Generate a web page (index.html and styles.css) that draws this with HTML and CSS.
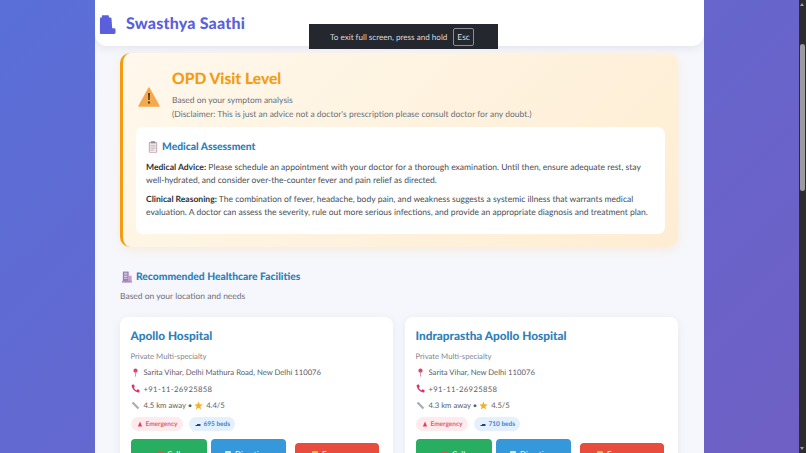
FILE: index.html
```html
<!DOCTYPE html>
<html lang="en">
<head>
    <meta charset="UTF-8">
    <meta name="viewport" content="width=device-width, initial-scale=1.0">
    <title>Swasthya Saathi</title>
    <link rel="stylesheet" href="styles.css">
</head>
<body>

    <div class="page">
        <!-- header -->
        <div class="header">
            <svg class="logo" viewBox="0 0 18 20"><path d="M1 3.5 Q1 2.5 2 2.5 H3 V1 Q3 .2 3.8 .2 H9.5 Q10.5 .2 10.5 1 V2.5 H12 Q13 2.5 13.2 3.5 L14 14 H16 Q17.5 14 17.5 15.5 V18.5 Q17.5 20 16 20 H2 Q1 20 1 19 Z" fill="#5b5fdc"/></svg>
            <span class="brand">Swasthya Saathi</span>
        </div>

        <div class="main">
            <!-- triage level -->
            <div class="level-card">
                <div class="level-top">
                    <svg class="warn" viewBox="0 0 22 20"><path d="M11 1 L21 19 H1 Z" fill="#f5a94c" stroke="#f5a94c" stroke-width="1.5" stroke-linejoin="round"/><path d="M10 6 H12 L11.7 13 H10.3 Z M10 14.5 H12 V16.5 H10 Z" fill="#4a3a28"/></svg>
                    <div>
                        <h1>OPD Visit Level</h1>
                        <p class="level-sub">Based on your symptom analysis</p>
                        <p class="level-sub">(Disclaimer: This is just an advice not a doctor's prescription please consult doctor for any doubt.)</p>
                    </div>
                </div>
                <div class="assess">
                    <h3>
                        <svg class="head-icon" viewBox="0 0 12 14"><rect x="1" y="1" width="10" height="13" rx="1" fill="#c9a6a8"/><rect x="2.2" y="2.5" width="7.6" height="10.5" fill="#f0ecef"/><rect x="3.5" y="0" width="5" height="2.5" rx=".6" fill="#8d8a99"/><path d="M3 5 H9 M3 7 H9 M3 9 H9 M3 11 H7" stroke="#a9a4b6" stroke-width=".7"/></svg>
                        Medical Assessment
                    </h3>
                    <p><b>Medical Advice:</b> Please schedule an appointment with your doctor for a thorough examination. Until then, ensure adequate rest, stay well-hydrated, and consider over-the-counter fever and pain relief as directed.</p>
                    <p><b>Clinical Reasoning:</b> The combination of fever, headache, body pain, and weakness suggests a systemic illness that warrants medical evaluation. A doctor can assess the severity, rule out more serious infections, and provide an appropriate diagnosis and treatment plan.</p>
                </div>
            </div>

            <!-- facilities -->
            <h2 class="fac-title">
                <svg class="head-icon" viewBox="0 0 12 13"><rect x="1" y="0" width="7" height="13" fill="#9a7fb5"/><rect x="8" y="5" width="3.5" height="8" fill="#c79bc4"/><path d="M2.5 2 H6.5 M2.5 4 H6.5 M2.5 6 H6.5 M2.5 8 H6.5" stroke="#e6dcef" stroke-width="1"/><rect x="0" y="11" width="12" height="2" fill="#b78fbe"/></svg>
                Recommended Healthcare Facilities
            </h2>
            <p class="fac-sub">Based on your location and needs</p>

            <div class="fac-grid">
                <div class="fac-card">
                    <h4>Apollo Hospital</h4>
                    <p class="fac-type">Private Multi-specialty</p>
                    <p class="fac-row">
                        <svg class="row-icon" viewBox="0 0 10 12"><circle cx="5" cy="3.6" r="2.8" fill="#e0416b"/><path d="M5 5 V11.5" stroke="#d98a9d" stroke-width="1.2"/></svg>
                        Sarita Vihar, Delhi Mathura Road, New Delhi 110076
                    </p>
                    <p class="fac-row">
                        <svg class="row-icon" viewBox="0 0 12 12"><path d="M1.5 1 L4 .8 L5 3.5 L3.6 4.8 Q4.8 7.4 7.3 8.5 L8.6 7 L11.3 8 V10.6 Q11 11.5 9.5 11.2 Q2 9.5 .8 2.4 Q.8 1.4 1.5 1 Z" fill="#d6336c"/></svg>
                        <span class="phone">+91-11-26925858</span>
                    </p>
                    <p class="fac-row">
                        <svg class="row-icon" viewBox="0 0 12 12"><path d="M2 2 L10 10" stroke="#a9adb5" stroke-width="3"/></svg>
                        4.5 km away •
                        <svg class="star" viewBox="0 0 12 12"><path d="M6 .6 L7.6 4.2 L11.5 4.6 L8.6 7.2 L9.4 11.2 L6 9.1 L2.6 11.2 L3.4 7.2 L.5 4.6 L4.4 4.2 Z" fill="#f0b429"/></svg>
                        4.4/5
                    </p>
                    <div class="badges">
                        <span class="badge badge-red"><svg class="badge-icon" viewBox="0 0 10 10"><path d="M5 1 L8.5 9 H1.5 Z" fill="#e0415a"/></svg>Emergency</span>
                        <span class="badge badge-blue"><svg class="badge-icon" viewBox="0 0 12 10"><path d="M1 2 V9 H11 V5 H4 V7 H1 Z" fill="#2c3e8f"/></svg>695 beds</span>
                    </div>
                    <div class="actions">
                        <span class="btn btn-green"><i class="btn-mark mark-red"></i>Call</span>
                        <span class="btn btn-blue"><i class="btn-mark mark-white"></i>Directions</span>
                        <span class="btn btn-red"><i class="btn-mark mark-yellow"></i>Emergency</span>
                    </div>
                </div>

                <div class="fac-card">
                    <h4>Indraprastha Apollo Hospital</h4>
                    <p class="fac-type">Private Multi-specialty</p>
                    <p class="fac-row">
                        <svg class="row-icon" viewBox="0 0 10 12"><circle cx="5" cy="3.6" r="2.8" fill="#e0416b"/><path d="M5 5 V11.5" stroke="#d98a9d" stroke-width="1.2"/></svg>
                        Sarita Vihar, New Delhi 110076
                    </p>
                    <p class="fac-row">
                        <svg class="row-icon" viewBox="0 0 12 12"><path d="M1.5 1 L4 .8 L5 3.5 L3.6 4.8 Q4.8 7.4 7.3 8.5 L8.6 7 L11.3 8 V10.6 Q11 11.5 9.5 11.2 Q2 9.5 .8 2.4 Q.8 1.4 1.5 1 Z" fill="#d6336c"/></svg>
                        <span class="phone">+91-11-26925858</span>
                    </p>
                    <p class="fac-row">
                        <svg class="row-icon" viewBox="0 0 12 12"><path d="M2 2 L10 10" stroke="#a9adb5" stroke-width="3"/></svg>
                        4.3 km away •
                        <svg class="star" viewBox="0 0 12 12"><path d="M6 .6 L7.6 4.2 L11.5 4.6 L8.6 7.2 L9.4 11.2 L6 9.1 L2.6 11.2 L3.4 7.2 L.5 4.6 L4.4 4.2 Z" fill="#f0b429"/></svg>
                        4.5/5
                    </p>
                    <div class="badges">
                        <span class="badge badge-red"><svg class="badge-icon" viewBox="0 0 10 10"><path d="M5 1 L8.5 9 H1.5 Z" fill="#e0415a"/></svg>Emergency</span>
                        <span class="badge badge-blue"><svg class="badge-icon" viewBox="0 0 12 10"><path d="M1 2 V9 H11 V5 H4 V7 H1 Z" fill="#2c3e8f"/></svg>710 beds</span>
                    </div>
                    <div class="actions">
                        <span class="btn btn-green"><i class="btn-mark mark-red"></i>Call</span>
                        <span class="btn btn-blue"><i class="btn-mark mark-white"></i>Directions</span>
                        <span class="btn btn-red"><i class="btn-mark mark-yellow"></i>Emergency</span>
                    </div>
                </div>
            </div>
        </div>
    </div>

    <!-- browser overlays -->
    <div class="fs-toast">To exit full screen, press and hold <span class="esc">Esc</span></div>
    <div class="scrollbar">
        <span class="arrow"></span>
        <span class="thumb"></span>
        <span class="arrow arrow-down"></span>
    </div>

</body>
</html>
```

FILE: styles.css
```css
* {
    margin: 0;
    padding: 0;
    box-sizing: border-box;
}
html, body {
    height: 100%;
    overflow: hidden;
}
body {
    font-family: Lato, Roboto, Arial, sans-serif;
    text-rendering: geometricPrecision;
    background: linear-gradient(135deg, #5a6fd8 0%, #6f5fc4 100%);
    color: #4a5058;
}
.page {
    width: 609px;
    height: 453px;
    margin-left: 95px;
    background-color: #f6f7fc;
    overflow: hidden;
}
.header {
    height: 46px;
    padding: 1px 5px 0 4px;
    display: flex;
    align-items: center;
    gap: 10px;
    background-color: #fff;
    border-radius: 0 0 12px 12px;
    box-shadow: 0 2px 10px rgba(60, 60, 110, 0.1);
}
.logo {
    width: 17px;
    height: 19px;
    margin-top: 1px;
}
.brand {
    font-size: 16px;
    font-weight: 900;
    letter-spacing: 0.2px;
    color: #5b5fdc;
}
.main {
    padding: 7px 26px 0 25px;
}
.level-card {
    height: 194px;
    padding: 16px 13px 0 15px;
    background: linear-gradient(135deg, #fff8ec 0%, #feedd2 100%);
    border-left: 3px solid #f39c12;
    border-radius: 10px;
    box-shadow: 0 3px 12px rgba(243, 156, 18, 0.12);
}
.level-top {
    display: flex;
    align-items: center;
    gap: 12px;
    margin-bottom: 6px;
}
.warn {
    width: 22px;
    height: 20px;
    margin-top: 4px;
}
.level-top h1 {
    font-size: 15.6px;
    line-height: 20px;
    font-weight: 900;
    color: #f39c12;
    margin-bottom: 4px;
}
.level-sub {
    font-size: 8.5px;
    line-height: 14px;
    color: #6b7078;
}
.assess {
    height: 107px;
    padding: 13px 12px 0 10px;
    margin-left: -2px;
    background-color: #fff;
    border-radius: 7px;
}
.assess h3, .fac-title {
    display: flex;
    align-items: center;
    gap: 4px;
    font-size: 10.3px;
    line-height: 14px;
    font-weight: 900;
    color: #2f80b9;
}
.assess h3 {
    margin-left: 2px;
    margin-bottom: 7px;
}
.assess p {
    font-size: 8.55px;
    line-height: 13px;
    margin-bottom: 6px;
}
.assess b {
    color: #2c3440;
}
.head-icon {
    width: 10px;
    height: 12px;
}
.fac-title {
    margin-top: 23px;
    margin-bottom: 6px;
    margin-left: 2px;
}
.fac-sub {
    font-size: 8.5px;
    line-height: 12px;
    color: #6b7078;
    margin-bottom: 15px;
}
.fac-grid {
    display: grid;
    grid-template-columns: 273px 273px;
    gap: 12px;
}
.fac-card {
    height: 200px;
    padding: 11px 11px 0 10.5px;
    background-color: #fff;
    border-radius: 8px;
    box-shadow: 0 2px 8px rgba(60, 60, 110, 0.08);
}
.fac-card h4 {
    font-size: 11.8px;
    line-height: 15px;
    font-weight: 900;
    color: #2f80b9;
    margin-bottom: 7px;
}
.fac-type {
    font-size: 7.7px;
    line-height: 12px;
    color: #80858c;
    margin-bottom: 4px;
}
.fac-row {
    display: flex;
    align-items: center;
    gap: 3px;
    height: 12px;
    margin-bottom: 4.5px;
    font-size: 7.7px;
    color: #5a6068;
}
.phone {
    letter-spacing: 0.35px;
}
.row-icon {
    width: 9px;
    height: 9px;
    margin-right: 1px;
}
.star {
    width: 9px;
    height: 9px;
    margin-left: -1px;
}
.badges {
    display: flex;
    gap: 6px;
    margin-top: 6px;
}
.badge {
    display: flex;
    align-items: center;
    gap: 3px;
    height: 14px;
    padding: 0 5px 0 6px;
    border-radius: 7px;
    font-size: 6.5px;
    font-weight: 700;
}
.badge-icon {
    width: 6px;
    height: 6px;
}
.badge-red {
    background-color: #fdebee;
    color: #e0606f;
}
.badge-blue {
    background-color: #e4f0fc;
    color: #3f86cf;
}
.actions {
    display: flex;
    align-items: flex-start;
    gap: 4px;
    margin-top: 8px;
}
.btn {
    height: 30px;
    display: flex;
    align-items: center;
    justify-content: center;
    gap: 4px;
    border-radius: 4px;
    color: #fff;
    font-size: 8px;
}
.btn-green {
    width: 76px;
    background-color: #27ae60;
}
.btn-blue {
    width: 75px;
    background-color: #3498db;
}
.btn-red {
    width: 84px;
    height: 22px;
    margin-top: 4px;
    margin-left: 5px;
    background-color: #e74c3c;
}
.btn-mark {
    width: 6px;
    height: 7px;
    border-radius: 1px;
}
.mark-red {
    background-color: #d9534f;
}
.mark-white {
    background-color: #d6e9f7;
}
.mark-yellow {
    background-color: #f5c04a;
}
.fs-toast {
    position: absolute;
    top: 24px;
    left: 309px;
    width: 189px;
    height: 25px;
    padding-left: 21px;
    display: flex;
    align-items: center;
    gap: 6px;
    background-color: #24272e;
    color: #d8dadd;
    font-size: 8.1px;
}
.esc {
    padding: 3px 3px;
    border: 1px solid #8a8d92;
    border-radius: 2px;
    font-size: 8.4px;
}
.scrollbar {
    position: absolute;
    top: 0;
    right: 0;
    width: 7px;
    height: 100%;
    background-color: #2c2c2c;
}
.arrow {
    position: absolute;
    top: 3px;
    left: 1px;
    border-left: 2.5px solid transparent;
    border-right: 2.5px solid transparent;
    border-bottom: 3px solid #a0a0a0;
}
.arrow-down {
    top: auto;
    bottom: 3px;
    border-bottom: 0;
    border-top: 3px solid #a0a0a0;
}
.thumb {
    position: absolute;
    top: 44px;
    left: 1px;
    width: 5px;
    height: 147px;
    border-radius: 3px;
    background-color: #9b9b9b;
}
```
